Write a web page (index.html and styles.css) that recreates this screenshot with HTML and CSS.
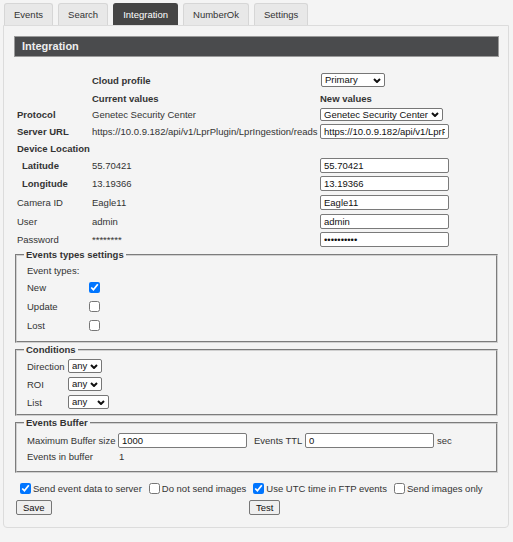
FILE: index.html
```html
<!DOCTYPE html>
<html>
<head>
<meta charset="utf-8">
<title>Integration</title>
<link rel="stylesheet" href="styles.css">
</head>
<body>
<div class="tabs">
  <div class="tab">Events</div>
  <div class="tab">Search</div>
  <div class="tab active">Integration</div>
  <div class="tab">NumberOk</div>
  <div class="tab">Settings</div>
</div>
<div class="panel">
  <div class="header">Integration</div>
  <table class="form">
    <colgroup><col class="c1"><col class="c2"><col class="c3"></colgroup>
    <tr><td></td><td class="b">Cloud profile</td><td><select class="sel sel-profile"><option>Primary</option></select></td></tr>
    <tr><td></td><td class="b">Current values</td><td class="b">New values</td></tr>
    <tr class="tight"><td class="b">Protocol</td><td>Genetec Security Center</td><td><select class="sel sel-proto"><option>Genetec Security Center</option></select></td></tr>
    <tr><td class="b">Server URL</td><td>https://10.0.9.182/api/v1/LprPlugin/LprIngestion/reads</td><td><input class="txt" type="text" value="https://10.0.9.182/api/v1/LprPlugin/LprIngestion/reads"></td></tr>
    <tr class="dev"><td class="b" colspan="3">Device Location</td></tr>
    <tr class="dev"><td class="b ind">Latitude</td><td>55.70421</td><td><input class="txt" type="text" value="55.70421"></td></tr>
    <tr class="tall"><td class="b ind">Longitude</td><td>13.19366</td><td><input class="txt" type="text" value="13.19366"></td></tr>
    <tr class="tall"><td>Camera ID</td><td>Eagle11</td><td><input class="txt" type="text" value="Eagle11"></td></tr>
    <tr><td>User</td><td>admin</td><td><input class="txt" type="text" value="admin"></td></tr>
    <tr><td>Password</td><td>********</td><td><input class="txt" type="password" value="1234567890"></td></tr>
  </table>

  <fieldset class="group">
    <legend>Events types settings</legend>
    <table class="types">
      <tr class="first"><td colspan="2">Event types:</td></tr>
      <tr><td class="tl">New</td><td><input type="checkbox" class="cb" checked></td></tr>
      <tr><td class="tl">Update</td><td><input type="checkbox" class="cb"></td></tr>
      <tr><td class="tl">Lost</td><td><input type="checkbox" class="cb"></td></tr>
    </table>
  </fieldset>

  <fieldset class="group cond">
    <legend>Conditions</legend>
    <table class="conds">
      <tr><td class="cl">Direction</td><td><select class="sel sel-any"><option>any</option></select></td></tr>
      <tr><td class="cl">ROI</td><td><select class="sel sel-any"><option>any</option></select></td></tr>
      <tr><td class="cl">List</td><td><select class="sel sel-list"><option>any</option></select></td></tr>
    </table>
  </fieldset>

  <fieldset class="group buf">
    <legend>Events Buffer</legend>
    <table class="buffer">
      <tr class="r1"><td class="bl">Maximum Buffer size</td><td><input class="txt" type="text" value="1000"></td><td class="ttl">Events TTL</td><td><input class="txt" type="text" value="0"></td><td class="sec">sec</td></tr>
      <tr class="r2"><td class="bl">Events in buffer</td><td class="one">1</td><td></td><td></td><td></td></tr>
    </table>
  </fieldset>

  <div class="options">
    <label class="opt"><input type="checkbox" class="cb" checked>Send event data to server</label>
    <label class="opt"><input type="checkbox" class="cb">Do not send images</label>
    <label class="opt"><input type="checkbox" class="cb" checked>Use UTC time in FTP events</label>
    <label class="opt"><input type="checkbox" class="cb">Send images only</label>
  </div>
  <div class="actions">
    <div><button class="btn">Save</button></div>
    <div><button class="btn">Test</button></div>
  </div>
</div>
</body>
</html>
```

FILE: styles.css
```css
* { box-sizing: border-box; }

body {
  margin: 0;
  background: #f4f4f4;
  font-family: "Liberation Sans", Arial, sans-serif;
  font-size: 9.5px;
  color: #333;
}

.tabs {
  display: flex;
  gap: 5px;
  padding: 3px 0 0 4px;
  height: 25px;
}

.tab {
  height: 22px;
  line-height: 21px;
  padding: 0 9px;
  border: 1px solid #d6d6d6;
  border-bottom: none;
  border-radius: 3px 3px 0 0;
  background: #e8e8e8;
  color: #333;
}

.tab.active {
  background: #454545;
  border-color: #454545;
  color: #fff;
}

.panel {
  margin: 0 4px 0 3px;
  border: 1px solid #dcdcdc;
  border-radius: 0 0 4px 4px;
  padding: 10px 9px 12px 10px;
}

.header {
  height: 21px;
  background: #4a4b4d;
  border: 1px solid #9a9a9a;
  color: #eee;
  font-size: 11px;
  font-weight: bold;
  line-height: 19px;
  padding-left: 7px;
}

.form {
  margin: 14px 0 0 3px;
  border-collapse: collapse;
  table-layout: fixed;
  width: 482px;
}

.form .c1 { width: 75px; }
.form .c2 { width: 228px; }

.form td {
  padding: 0;
  height: 18px;
  white-space: nowrap;
  overflow: visible;
  vertical-align: middle;
}

.form tr.tight td { height: 15px; }
.form tr.dev td { height: 17px; }
.form tr.tall td { height: 19px; }

.b { font-weight: bold; }
.ind { padding-left: 5px !important; }

.txt {
  width: 129px;
  height: 15px;
  padding: 0 3px;
  border: 1px solid #7a7a7a;
  border-radius: 2px;
  background: #fff;
  font-family: "Liberation Sans", Arial, sans-serif;
  font-size: 9.5px;
  color: #111;
  vertical-align: middle;
}

.sel {
  -webkit-appearance: none;
  appearance: none;
  height: 14px;
  padding: 0 11px 0 3px;
  border: 1px solid #767676;
  border-radius: 2px;
  background: #fff url("data:image/svg+xml,%3Csvg xmlns='http://www.w3.org/2000/svg' viewBox='0 0 8 5'%3E%3Cpath d='M1 1l3 3 3-3' fill='none' stroke='%23111' stroke-width='2'/%3E%3C/svg%3E") no-repeat right 3px center;
  background-size: 8px 5px;
  font-family: "Liberation Sans", Arial, sans-serif;
  font-size: 9.5px;
  line-height: 12px;
  color: #111;
  vertical-align: middle;
}

.sel-profile { width: 64px; margin-left: 1px; }
.sel-proto { width: 123px; height: 13px; }
.sel-any { width: 34px; }
.sel-list { width: 41px; }

.group {
  margin: 0 1px;
  padding: 1px 8px 6px 10px;
  border: 2px groove #d0d0d0;
  min-width: 0;
}

.group legend {
  margin-left: -3px;
  padding: 0 2px;
  font-weight: bold;
  line-height: 13px;
  color: #333;
}

.types, .conds, .buffer {
  border-collapse: collapse;
}

.types td, .conds td, .buffer td {
  padding: 0;
  vertical-align: middle;
  white-space: nowrap;
}

.types tr td { height: 19px; }
.types tr.first td { height: 16px; }
.types .tl { width: 62px; }

.cb {
  width: 11px;
  height: 11px;
  margin: 0;
  vertical-align: middle;
}

.cond { padding-bottom: 3px; }
.conds td { height: 18px; }
.conds .cl { width: 41px; }

.buf { padding-bottom: 8px; }
.buffer .r1 td { height: 20px; }
.buffer .r2 td { height: 13px; }
.buffer .bl { width: 91px; }
.buffer .ttl { padding-left: 7px; width: 58px; }
.buffer .sec { padding-left: 3px; }
.buffer .one { padding-left: 1px; }

.options {
  display: flex;
  gap: 7px;
  padding: 8px 0 0 6px;
  height: 23px;
  align-items: center;
}

.opt {
  display: inline-flex;
  align-items: center;
  gap: 2px;
  white-space: nowrap;
}

.actions {
  display: grid;
  grid-template-columns: 233px auto;
  padding: 4px 0 0 2px;
}

.btn {
  height: 15px;
  padding: 0 6px;
  border: 1px solid #767676;
  border-radius: 2px;
  background: #efefef;
  font-family: "Liberation Sans", Arial, sans-serif;
  font-size: 9.5px;
  color: #111;
  line-height: 13px;
}
```
